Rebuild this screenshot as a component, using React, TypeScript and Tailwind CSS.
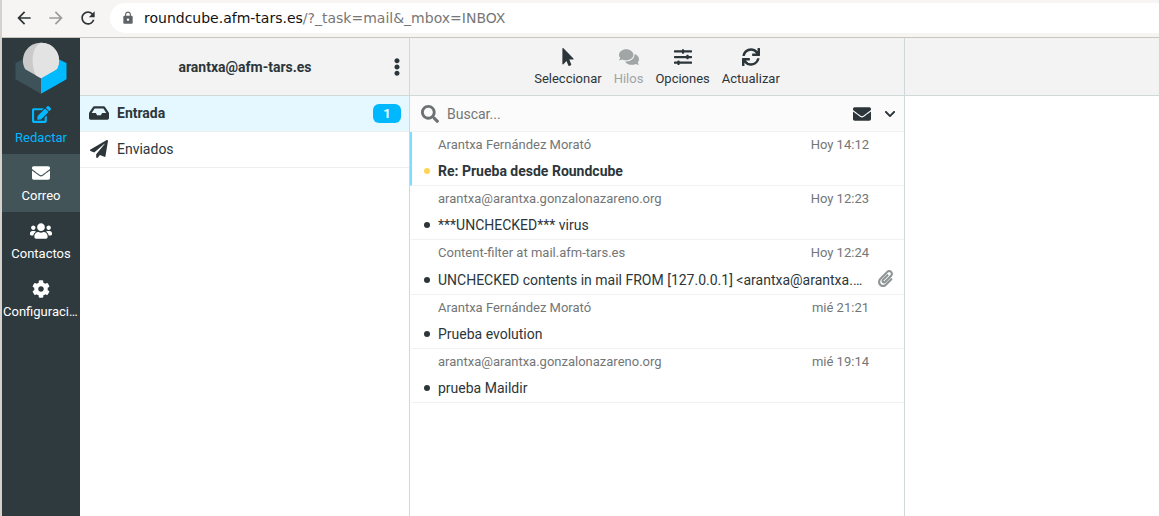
import type { ReactNode } from "react";
import {
  FaChevronDown,
  FaCog,
  FaComments,
  FaEdit,
  FaEllipsisV,
  FaEnvelope,
  FaInbox,
  FaMousePointer,
  FaPaperclip,
  FaPaperPlane,
  FaSearch,
  FaSlidersH,
  FaSync,
  FaUsers,
} from "react-icons/fa";
import { MdArrowBack, MdArrowForward, MdLock, MdRefresh } from "react-icons/md";

type Message = {
  from: string;
  date: string;
  subject: string;
  unread?: boolean;
  attachment?: boolean;
};

const messages: Message[] = [
  { from: "Arantxa Fernández Morató", date: "Hoy 14:12", subject: "Re: Prueba desde Roundcube", unread: true },
  { from: "arantxa@arantxa.gonzalonazareno.org", date: "Hoy 12:23", subject: "***UNCHECKED*** virus" },
  {
    from: "Content-filter at mail.afm-tars.es",
    date: "Hoy 12:24",
    subject: "UNCHECKED contents in mail FROM [127.0.0.1] <arantxa@arantxa.gonzalonazareno.org>",
    attachment: true,
  },
  { from: "Arantxa Fernández Morató", date: "mié 21:21", subject: "Prueba evolution" },
  { from: "arantxa@arantxa.gonzalonazareno.org", date: "mié 19:14", subject: "prueba Maildir" },
];

function BrowserBar() {
  return (
    <header className="flex h-[38px] shrink-0 items-center border-b border-[#c9c5bf] bg-[#f6f5f4] pb-[2px] pl-3">
      <button aria-label="Atrás" className="mr-3 text-[#2e3436]">
        <MdArrowBack size={20} />
      </button>
      <button aria-label="Adelante" className="mr-3 text-[#9a9c9b]" disabled>
        <MdArrowForward size={20} />
      </button>
      <button aria-label="Recargar" className="mr-3 text-[#2e3436]">
        <MdRefresh size={20} />
      </button>
      <div className="flex h-[30px] flex-1 items-center rounded-l-full bg-white pl-[11px]">
        <MdLock size={14} className="mr-[9px] shrink-0 text-[#5f6368]" />
        <span className="whitespace-nowrap font-['DejaVu_Sans',sans-serif] text-sm leading-5 text-[#777777]">
          <span className="text-[#111111]">roundcube.afm-tars.es</span>/?_task=mail&amp;_mbox=INBOX
        </span>
      </div>
    </header>
  );
}

function Logo() {
  return (
    <svg viewBox="0 0 52 52" className="mx-auto mt-1 block size-[52px]" role="img" aria-label="Roundcube">
      <path d="M.5 21 9 17l17 17v17.700L.5 37.300z" fill="#3e5359" />
      <path d="M51.500 21 43 17 26 34v17.700l25.500-14.400z" fill="#00baff" />
      <path d="M26 .7A17.800 17.800 0 0 0 9.800 26.500Q10.500 27.500 12 28.300L26 36.300l14-8q1.500-.8 2.200-1.800A17.800 17.800 0 0 0 26 .7z" fill="#cacaca" />
      <path d="M26 .7C16.500 5 15.500 21.500 20.800 33.300L26 36.300l14-8q1.500-.8 2.200-1.800A17.800 17.800 0 0 0 26 .7z" fill="#e3e3e3" />
    </svg>
  );
}

function TaskLink({ icon, label, tone }: { icon: ReactNode; label: string; tone?: "accent" | "selected" }) {
  const look =
    tone === "accent" ? "text-[#00b8ff]" : tone === "selected" ? "bg-[#435459] text-white" : "text-white";
  return (
    <a href="#" className={`flex h-[58px] flex-col items-center pt-2 text-[13px] leading-5 ${look}`}>
      <span className="flex h-[21px] items-center">{icon}</span>
      <span className="mt-[3px] w-full truncate px-px text-center">{label}</span>
    </a>
  );
}

function ToolButton({ icon, label, disabled }: { icon: ReactNode; label: string; disabled?: boolean }) {
  return (
    <button
      disabled={disabled}
      className="flex flex-col items-center px-1.5 text-[13px] leading-5 text-[#2c363a] disabled:text-[#a0a5a6]"
    >
      <span className="flex h-6 items-center">{icon}</span>
      {label}
    </button>
  );
}

function MessageRow({ message }: { message: Message }) {
  return (
    <li
      className={`border-b border-l-2 border-b-[#f0f2f2] pl-3 pr-[7px] ${
        message.unread ? "border-l-[#80dcff]" : "border-l-transparent"
      } ${message.attachment ? "h-[55px]" : "h-[54px]"}`}
    >
      <div className="flex justify-between pl-[14px] pr-7 pt-[3px] text-[13px] leading-5 text-[#737677]">
        <span>{message.from}</span>
        <span>{message.date}</span>
      </div>
      <div className={`flex items-center leading-6 ${message.attachment ? "mt-[5px]" : "mt-1"}`}>
        <span
          className={`mr-2 size-[6px] shrink-0 rounded-full ${message.unread ? "bg-[#ffd452]" : "bg-[#2c363a]"}`}
        />
        <a href="#" className={`mr-[13px] min-w-0 flex-1 truncate text-sm leading-6 ${message.unread ? "font-bold" : ""}`}>
          {message.subject}
        </a>
        <span className="w-5 shrink-0">
          {message.attachment && <FaPaperclip size={17} className="mb-1 text-[#8f9495]" aria-label="Adjunto" />}
        </span>
      </div>
    </li>
  );
}

export default function App() {
  return (
    <div className="flex min-h-screen flex-col border-l-2 border-[#d5d2cd] bg-white font-[Roboto,sans-serif] text-[#2c363a]">
      <BrowserBar />
      <div className="flex flex-1">
        <nav aria-label="Tareas" className="w-[78px] shrink-0 bg-[#2f3a3f]">
          <Logo />
          <div className="mt-[2px]">
            <TaskLink icon={<FaEdit size={19} />} label="Redactar" tone="accent" />
            <TaskLink icon={<FaEnvelope size={18} />} label="Correo" tone="selected" />
            <TaskLink icon={<FaUsers size={22} />} label="Contactos" />
            <TaskLink icon={<FaCog size={18} />} label="Configuración" />
          </div>
        </nav>

        <section aria-label="Carpetas" className="w-[330px] shrink-0 border-r border-[#ced9d9]">
          <div className="flex h-[58px] items-center border-b border-[#ced9d9] bg-[#f3f3f3] pr-[3px]">
            <h1 className="flex-1 pl-1.5 text-center text-sm font-bold">arantxa@afm-tars.es</h1>
            <button aria-label="Acciones de carpeta" className="-ml-4">
              <FaEllipsisV size={18} />
            </button>
          </div>
          <ul className="text-sm">
            <li className="border-b border-[#eef0f0] bg-[#e5f8ff]">
              <a href="#" className="flex h-[35px] items-center pb-px pl-[9px] pr-2 font-bold">
                <FaInbox size={20} className="mr-2" />
                <span className="flex-1">Entrada</span>
                <span className="h-[19px] w-7 rounded-md bg-[#00b8ff] text-center text-[13px] leading-[19px] text-white">
                  1
                </span>
              </a>
            </li>
            <li className="border-b border-[#eef0f0]">
              <a href="#" className="flex h-[35px] items-center pb-px pl-[9px]">
                <FaPaperPlane size={18} className="ml-px mr-[9px]" />
                Enviados
              </a>
            </li>
          </ul>
        </section>

        <section aria-label="Mensajes" className="w-[495px] shrink-0 border-r border-[#ced9d9]">
          <div className="flex h-[58px] justify-center border-b border-[#ced9d9] bg-[#f3f3f3] pt-[7px]">
            <ToolButton icon={<FaMousePointer size={18} />} label="Seleccionar" />
            <ToolButton icon={<FaComments size={20} />} label="Hilos" disabled />
            <ToolButton icon={<FaSlidersH size={18} />} label="Opciones" />
            <ToolButton icon={<FaSync size={18} />} label="Actualizar" />
          </div>
          <div className="flex h-9 items-center border-b border-[#f0f2f2] bg-[#fbfbfb] pl-[11px] pr-2">
            <FaSearch size={18} className="mr-2 shrink-0 text-[#6c7273]" />
            <input
              type="text"
              aria-label="Buscar"
              placeholder="Buscar..."
              className="min-w-0 flex-1 bg-transparent text-sm outline-none placeholder:text-[#737677]"
            />
            <button aria-label="Mostrar no leídos" className="mr-[13px]">
              <FaEnvelope size={18} />
            </button>
            <button aria-label="Opciones de búsqueda">
              <FaChevronDown size={12} />
            </button>
          </div>
          <ul>
            {messages.map((message) => (
              <MessageRow key={message.date} message={message} />
            ))}
          </ul>
        </section>

        <main className="min-w-0 flex-1">
          <div className="h-[58px] border-b border-[#ced9d9] bg-[#f3f3f3]" />
        </main>
      </div>
    </div>
  );
}
